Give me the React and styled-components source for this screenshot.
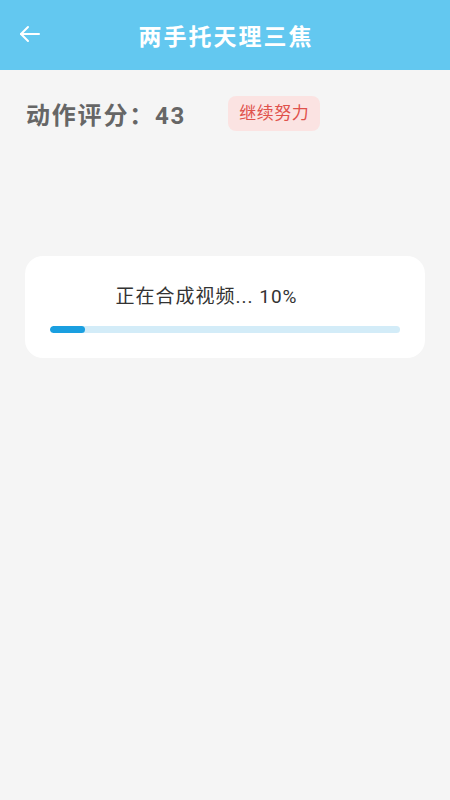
import React from "react";
import styled, { createGlobalStyle } from "styled-components";

const GlobalStyle = createGlobalStyle`
  body {
    margin: 0;
    background: #f5f5f5;
    font-family: Roboto, "Noto Sans CJK SC", sans-serif;
  }
`;

const Page = styled.div`
  min-height: 800px;
  background: #f5f5f5;
`;

const Header = styled.div`
  height: 70px;
  background: #63c8f0;
  display: flex;
  align-items: center;
  justify-content: center;
  position: relative;
`;

const BackButton = styled.div`
  position: absolute;
  left: 18px;
  top: 22px;
  width: 24px;
  height: 24px;
`;

const Title = styled.h1`
  margin: 0 0 0 2px;
  color: #fff;
  font-size: 23px;
  font-weight: 700;
  letter-spacing: 2px;
`;

const ScoreRow = styled.div`
  display: flex;
  align-items: center;
  padding: 26px 26px 0;
`;

const Score = styled.div`
  font-size: 24px;
  font-weight: 700;
  color: #666;
  letter-spacing: 1.8px;
`;

const Badge = styled.div`
  margin-left: 42px;
  padding: 4px 11px;
  border-radius: 8px;
  background: #fbe3e2;
  color: #e0524c;
  font-size: 17px;
  line-height: 27px;
  letter-spacing: 0.5px;
`;

const Card = styled.div`
  margin: 125px 25px 0;
  background: #fff;
  border-radius: 18px;
  padding: 26px 25px 25px;
`;

const Status = styled.div`
  text-align: center;
  padding-right: 37px;
  font-size: 19px;
  color: #333;
  line-height: 30px;
  letter-spacing: 1px;
`;

const Track = styled.div`
  margin-top: 14px;
  height: 7px;
  border-radius: 4px;
  background: #d3ecf8;
  overflow: hidden;
`;

const Fill = styled.div`
  height: 100%;
  border-radius: 4px;
  background: #1a9fe0;
`;

const progress = 10;

export default function App() {
  return (
    <Page>
      <GlobalStyle />
      <Header>
        <BackButton>
          <svg width="24" height="24" viewBox="0 0 24 24" fill="none" stroke="#fff" strokeWidth="2" strokeLinecap="round" strokeLinejoin="round">
            <path d="M21 12H3" />
            <path d="M10 5l-7 7 7 7" />
          </svg>
        </BackButton>
        <Title>两手托天理三焦</Title>
      </Header>
      <ScoreRow>
        <Score>动作评分：43</Score>
        <Badge>继续努力</Badge>
      </ScoreRow>
      <Card>
        <Status>正在合成视频... {progress}%</Status>
        <Track>
          <Fill style={{ width: `${progress}%` }} />
        </Track>
      </Card>
    </Page>
  );
}
